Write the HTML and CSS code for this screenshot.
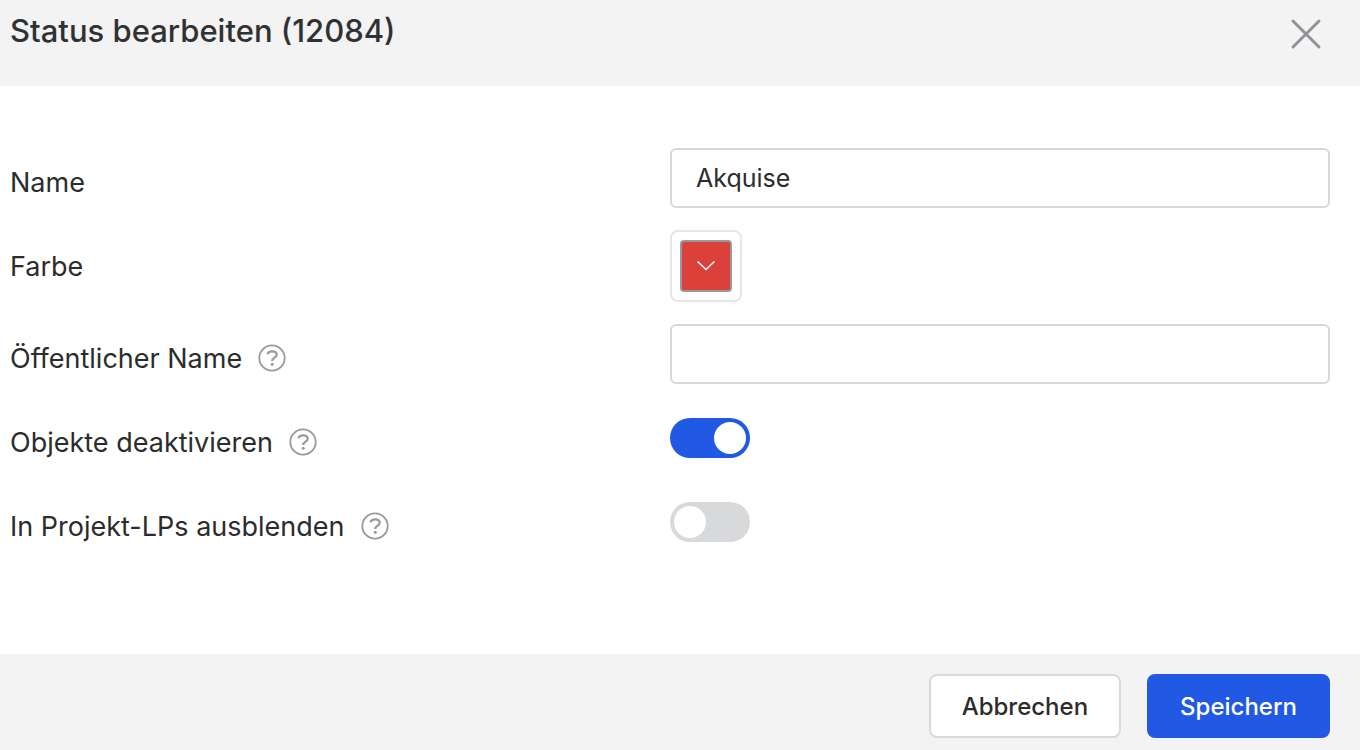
FILE: index.html
```
<!DOCTYPE html>
<html lang="de">
    <head>
        <meta charset="utf-8">
        <meta name="viewport" content="width=device-width, initial-scale=1">
        <title>Status bearbeiten</title>
        <link rel="stylesheet" href="styles.css">
    </head>
    <body>
        <form class="dialog">
            <header class="dialog-header">
                <h1 class="dialog-title">Status bearbeiten (12084)</h1>
                <button type="button" class="close-button" aria-label="Schließen">
                    <svg width="32" height="32" viewBox="0 0 32 32" fill="none" stroke="#909399" stroke-width="3" stroke-linecap="round">
                        <path d="M3 3L29 29M29 3L3 29"/>
                    </svg>
                </button>
            </header>

            <main class="dialog-body">
                <div class="form-row">
                    <label class="form-label" for="name">Name</label>
                    <div class="form-field">
                        <input class="text-input" id="name" type="text" value="Akquise">
                    </div>
                </div>

                <div class="form-row color-row">
                    <label class="form-label" for="color">Farbe</label>
                    <div class="form-field">
                        <button type="button" class="color-picker" id="color">
                            <span class="color-swatch">
                                <svg width="20" height="12" viewBox="0 0 20 12" fill="none" stroke="#fff" stroke-width="1.5">
                                    <path d="M1.500 1.500L10 9.500L18.500 1.500"/>
                                </svg>
                            </span>
                        </button>
                    </div>
                </div>

                <div class="form-row">
                    <div class="form-label">
                        <label for="public-name">Öffentlicher Name</label>
                        <svg class="help-icon" viewBox="0 0 28 28">
                            <circle cx="14" cy="14" r="12.700"/>
                            <path class="mark" d="M9.500 10.200C10 8.200 11.700 7.300 14.200 7.300C17 7.300 18.700 8.600 18.700 10.700C18.700 13.800 14.200 13.600 14.200 17"/>
                            <circle class="dot" cx="14.200" cy="20.300" r="1.500"/>
                        </svg>
                    </div>
                    <div class="form-field">
                        <input class="text-input" id="public-name" type="text">
                    </div>
                </div>

                <div class="form-row">
                    <div class="form-label">
                        <label for="deactivate">Objekte deaktivieren</label>
                        <svg class="help-icon" viewBox="0 0 28 28">
                            <circle cx="14" cy="14" r="12.700"/>
                            <path class="mark" d="M9.500 10.200C10 8.200 11.700 7.300 14.200 7.300C17 7.300 18.700 8.600 18.700 10.700C18.700 13.800 14.200 13.600 14.200 17"/>
                            <circle class="dot" cx="14.200" cy="20.300" r="1.500"/>
                        </svg>
                    </div>
                    <div class="form-field">
                        <input class="switch" id="deactivate" type="checkbox" checked>
                    </div>
                </div>

                <div class="form-row">
                    <div class="form-label">
                        <label for="hide">In Projekt-LPs ausblenden</label>
                        <svg class="help-icon" viewBox="0 0 28 28">
                            <circle cx="14" cy="14" r="12.700"/>
                            <path class="mark" d="M9.500 10.200C10 8.200 11.700 7.300 14.200 7.300C17 7.300 18.700 8.600 18.700 10.700C18.700 13.800 14.200 13.600 14.200 17"/>
                            <circle class="dot" cx="14.200" cy="20.300" r="1.500"/>
                        </svg>
                    </div>
                    <div class="form-field">
                        <input class="switch" id="hide" type="checkbox">
                    </div>
                </div>
            </main>

            <footer class="dialog-footer">
                <button type="button" class="button">Abbrechen</button>
                <button type="submit" class="button button-primary">Speichern</button>
            </footer>
        </form>
    </body>
</html>
```

FILE: styles.css
```
* {
    box-sizing: border-box;
}

body {
    margin: 0;
    font-family: Inter, "Liberation Sans", sans-serif;
    font-size: 27px;
    color: #2c2c2c;
    background-color: #fff;
}

.dialog {
    display: flex;
    flex-direction: column;
    min-height: 100vh;
}

/* HEADER */

.dialog-header {
    display: flex;
    justify-content: space-between;
    align-items: flex-start;
    padding: 12px 38px 36px 10px;
    background-color: #f3f3f3;
}

.dialog-title {
    margin: 0;
    font-size: 31px;
    line-height: 38px;
    font-weight: 500;
    color: #303133;
}

.close-button {
    display: flex;
    margin-top: 6px;
    padding: 0;
    border: none;
    background: none;
    cursor: pointer;
}

/* FORM */

.dialog-body {
    flex: 1;
    display: flex;
    flex-direction: column;
    gap: 24px;
    padding: 62px 30px 60px 10px;
}

.form-row {
    display: grid;
    grid-template-columns: 1fr 1fr;
    align-items: center;
    min-height: 60px;
}

.color-row {
    margin: -2px 0;
}

.form-label {
    display: flex;
    align-items: center;
    gap: 16px;
    padding-top: 8px;
}

/* the colour row is taller, so its label is centered on the picker */
.color-row .form-label {
    padding-top: 0;
}

.form-field {
    display: flex;
}

.help-icon {
    width: 28px;
    height: 28px;
    fill: none;
    stroke: #999;
    stroke-width: 1.8;
}

.help-icon .mark {
    stroke-width: 2.2;
}

.help-icon .dot {
    fill: #999;
    stroke: none;
}

.text-input {
    width: 100%;
    height: 60px;
    padding: 0 24px;
    border: 2px solid #d9d9d9;
    border-radius: 6px;
    font: inherit;
    font-size: 25px;
    color: inherit;
    background-color: #fff;
}

.color-picker {
    width: 72px;
    height: 72px;
    padding: 8px;
    border: 2px solid #e6e6e6;
    border-radius: 8px;
    background-color: #fff;
}

.color-swatch {
    display: flex;
    justify-content: center;
    align-items: center;
    height: 52px;
    border: 2px solid #999;
    border-radius: 4px;
    background-color: #dc403b;
}

.switch {
    appearance: none;
    width: 80px;
    height: 40px;
    margin: 0;
    padding: 4px;
    border-radius: 20px;
    background-color: #d8d9db;
    cursor: pointer;
}

.switch::before {
    content: "";
    display: block;
    width: 32px;
    height: 32px;
    border-radius: 50%;
    background-color: #fff;
}

.switch:checked {
    background-color: #2159e4;
}

.switch:checked::before {
    margin-left: auto;
}

/* FOOTER */

.dialog-footer {
    display: flex;
    justify-content: flex-end;
    gap: 26px;
    padding: 20px 30px 12px;
    background-color: #f3f3f3;
}

.button {
    height: 64px;
    padding: 0 31px;
    border: 2px solid #d9d9d9;
    border-radius: 8px;
    font: inherit;
    font-size: 24px;
    font-weight: 500;
    color: #2c2c2c;
    background-color: #fff;
    cursor: pointer;
}

.button-primary {
    border-color: #2159e4;
    color: #fff;
    background-color: #2159e4;
}
```
